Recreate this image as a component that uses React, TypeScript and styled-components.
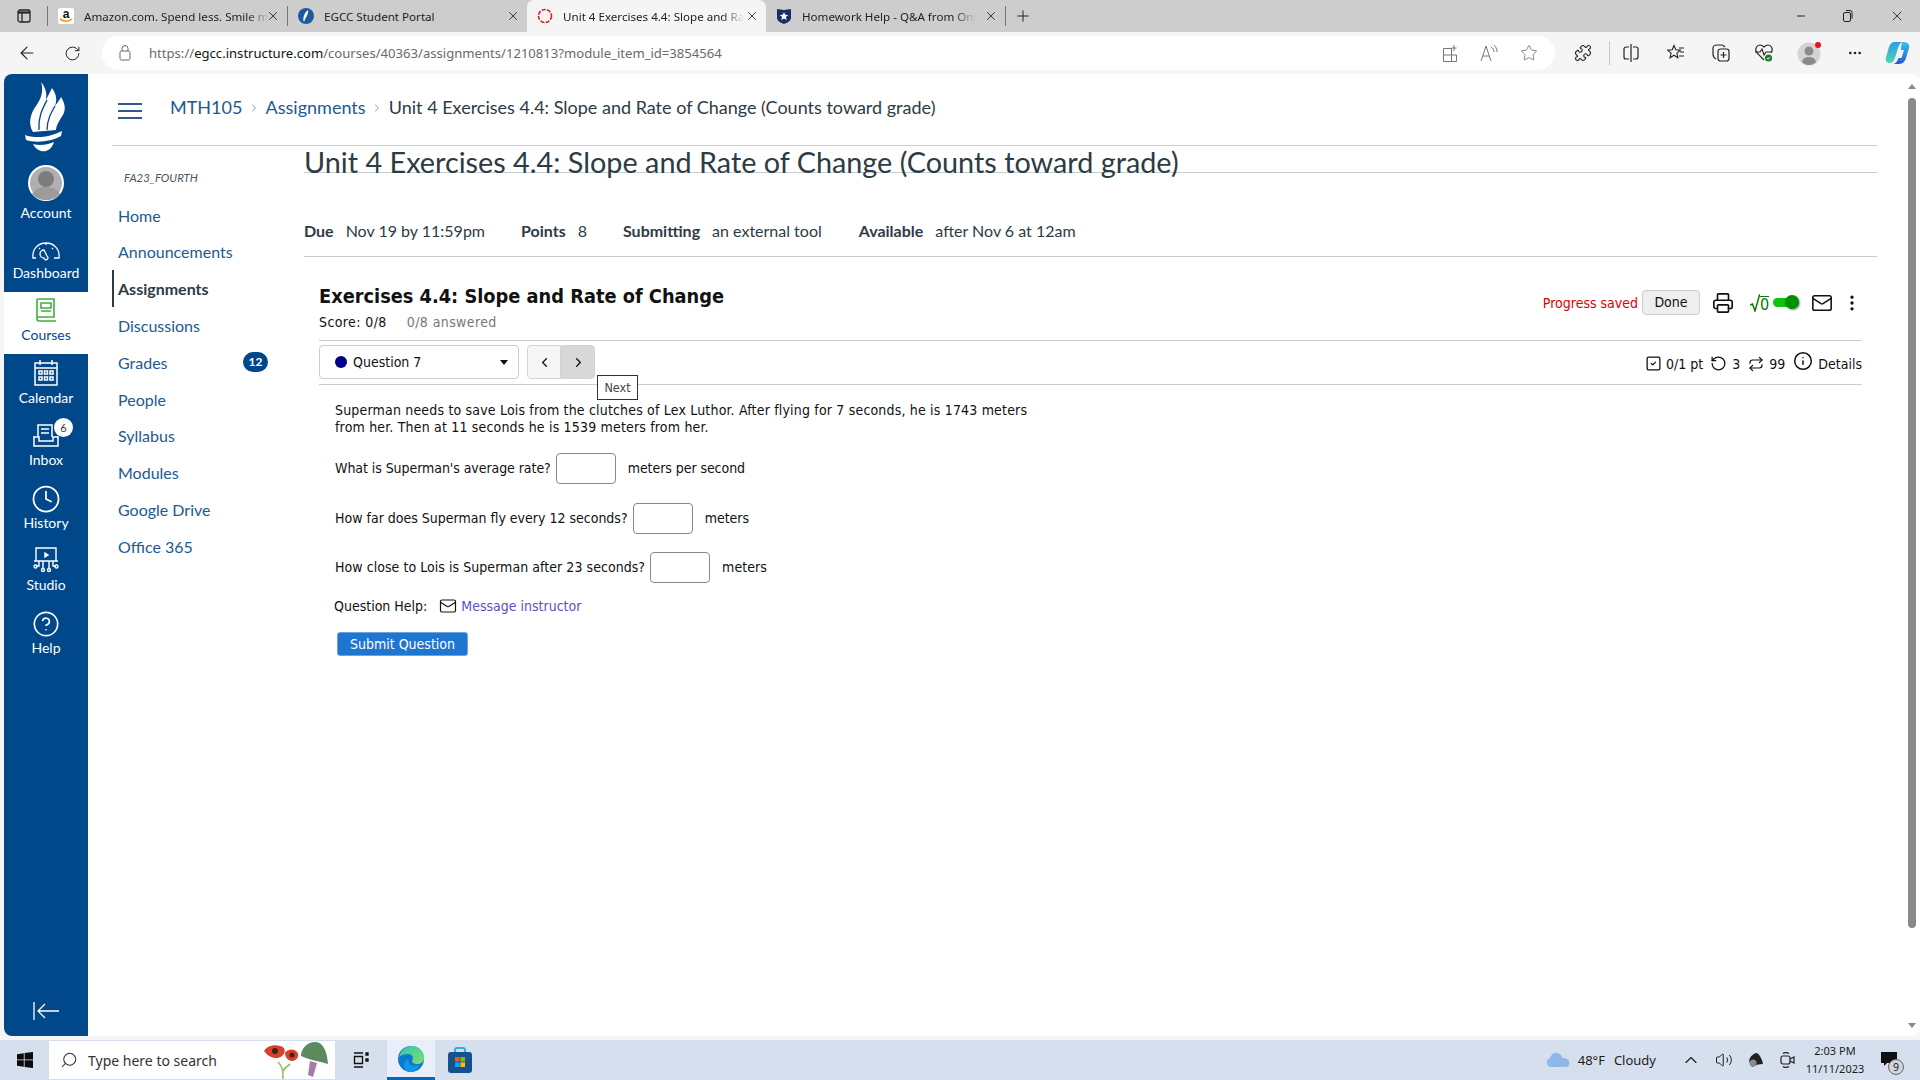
import React, { FC, ReactNode } from "react";
import styled, { createGlobalStyle } from "styled-components";
import {
  ArrowLeft,
  ChevronLeft,
  ChevronRight,
  ChevronUp,
  CircleHelp,
  Clock,
  Ellipsis,
  EllipsisVertical,
  Info,
  Mail,
  Minus,
  Plus,
  Printer,
  Puzzle,
  Repeat,
  RotateCcw,
  RotateCw,
  Search,
  SquareCheck,
  Star,
  Volume2,
  X,
} from "lucide-react";

const CHROME_FONT = `"Noto Sans", "Open Sans", sans-serif`;
const CANVAS_FONT = `Lato, "Open Sans", sans-serif`;
const QUIZ_FONT = `"DejaVu Sans Condensed", "DejaVu Sans", Verdana, sans-serif`;

const GlobalStyle = createGlobalStyle`
  html, body {
    margin: 0;
    height: 100%;
    overflow: hidden;
    background: #f5f5f5;
  }
  * { box-sizing: border-box; }
`;

const Screen = styled.div`
  display: flex;
  flex-direction: column;
  height: 1080px;
  width: 1920px;
  font-family: ${CHROME_FONT};
`;

/* browser chrome */
const TabStrip = styled.div`
  display: flex;
  align-items: center;
  height: 32px;
  background: #cdcdcd;
  color: #222;
`;

const SidebarToggle = styled.div`
  display: flex;
  align-items: center;
  justify-content: center;
  width: 47px;
  height: 32px;
  flex: none;
`;

const TabDivider = styled.div`
  width: 1px;
  height: 20px;
  background: #777;
  flex: none;
`;

const Tab = styled.div<{ $active?: boolean }>`
  display: flex;
  align-items: center;
  width: 239px;
  height: 32px;
  padding: 0 7px 0 10px;
  flex: none;
  font-size: 11.6px;
  background: ${(p) => (p.$active ? "#f5f5f5" : "transparent")};
  border-radius: ${(p) => (p.$active ? "7px 7px 0 0" : "0")};
`;

const Favicon = styled.span`
  display: flex;
  width: 16px;
  height: 16px;
  margin-right: 10px;
  flex: none;
`;

const TabTitle = styled.span`
  flex: 1;
  min-width: 0;
  white-space: nowrap;
`;

const TabFade = styled.span`
  display: inline-block;
  mask-image: linear-gradient(to left, transparent 0, #000 22px);
`;

const NewTab = styled.div`
  display: flex;
  margin-left: 8px;
`;

const WindowControls = styled.div`
  display: flex;
  align-items: center;
  gap: 35px;
  margin-left: auto;
  padding-right: 15px;
`;

const Toolbar = styled.div`
  display: flex;
  align-items: center;
  height: 42px;
  background: #f5f5f5;
  color: #222;
`;

const ToolButton = styled.div<{ $width: number }>`
  display: flex;
  align-items: center;
  justify-content: center;
  width: ${(p) => p.$width}px;
  height: 32px;
  flex: none;
`;

const AddressPill = styled.div`
  display: flex;
  align-items: center;
  width: 1453px;
  height: 34px;
  margin-left: 12px;
  padding-left: 17px;
  background: #fff;
  border-radius: 17px;
  flex: none;
`;

const Url = styled.div`
  margin-left: 18px;
  font-size: 13.1px;
  color: #6a6a6a;
  white-space: nowrap;
  b {
    font-weight: 400;
    color: #111;
  }
`;

const PillActions = styled.div`
  display: flex;
  align-items: center;
  gap: 22px;
  margin-left: auto;
  padding-right: 17px;
  color: #777;
`;

const ToolSeparator = styled.div`
  width: 1px;
  height: 24px;
  background: #c8c8c8;
  margin: 0 -1px 0 -2px;
  flex: none;
`;

/* page frame */
const Viewport = styled.div`
  display: flex;
  flex: 1;
  min-height: 0;
  margin: 0 0 4px 4px;
  background: #fff;
  border-radius: 8px;
  overflow: hidden;
`;

const GlobalNav = styled.nav`
  display: flex;
  flex-direction: column;
  width: 84px;
  flex: none;
  background: #00488a;
  font-family: ${CANVAS_FONT};
`;

const LogoSlot = styled.div`
  display: flex;
  justify-content: center;
  height: 88px;
  padding-top: 8px;
  flex: none;
`;

const NavItem = styled.div<{ $active?: boolean; $height?: number; $pad?: number }>`
  position: relative;
  display: flex;
  flex-direction: column;
  align-items: center;
  justify-content: flex-end;
  gap: 3px;
  height: ${(p) => p.$height ?? 62.2}px;
  padding-bottom: ${(p) => p.$pad ?? 10}px;
  flex: none;
  font-size: 14px;
  line-height: 18px;
  color: ${(p) => (p.$active ? "#00488a" : "#fff")};
  background: ${(p) => (p.$active ? "#fff" : "transparent")};
`;

const NavGlyph = styled.span<{ $lift: number }>`
  display: flex;
  margin-bottom: ${(p) => p.$lift}px;
`;

const NavBadge = styled.span`
  position: absolute;
  top: 1px;
  left: 50px;
  width: 19px;
  height: 19px;
  border-radius: 50%;
  background: #fff;
  color: #2d3b45;
  font-size: 11px;
  line-height: 19px;
  text-align: center;
`;

const Collapse = styled.div`
  display: flex;
  justify-content: center;
  margin-top: auto;
  padding-bottom: 16px;
  color: #fff;
`;

const Main = styled.main`
  display: flex;
  flex-direction: column;
  flex: 1;
  min-width: 0;
  font-family: ${CANVAS_FONT};
`;

const Breadcrumbs = styled.div`
  display: flex;
  align-items: center;
  height: 72px;
  margin: 0 27px 0 24px;
  border-bottom: 1px solid #c7cdd1;
  flex: none;
  padding-bottom: 5px;
  font-size: 18px;
  color: #2d3b45;
`;

const Hamburger = styled.div`
  display: flex;
  flex-direction: column;
  gap: 5px;
  width: 24px;
  margin: 7px 28px 0 6px;
  span {
    height: 2px;
    background: #2d5b8e;
  }
`;

const Crumb = styled.span<{ $link?: boolean }>`
  color: ${(p) => (p.$link ? "#1d5a90" : "#2d3b45")};
`;

const CrumbSep = styled.span`
  display: flex;
  margin: 2px 5.6px 0;
  color: #8b969e;
`;

const Body = styled.div`
  display: flex;
  flex: 1;
  min-height: 0;
`;

const CourseNav = styled.div`
  width: 216px;
  padding: 25px 0 0 24px;
  flex: none;
`;

const Term = styled.div`
  margin: 0 0 11.8px 12px;
  font-size: 11.4px;
  line-height: 14px;
  font-style: italic;
  color: #4a5660;
`;

const CourseLink = styled.div<{ $active?: boolean }>`
  display: flex;
  align-items: center;
  justify-content: space-between;
  width: 156px;
  height: 36.8px;
  padding-left: 4px;
  font-size: 16px;
  font-weight: ${(p) => (p.$active ? 700 : 400)};
  color: ${(p) => (p.$active ? "#2d3b45" : "#1d5a90")};
  border-left: 2px solid ${(p) => (p.$active ? "#2d3b45" : "transparent")};
`;

const CountBadge = styled.span`
  min-width: 25px;
  height: 20px;
  border-radius: 10px;
  background: #00488a;
  color: #fff;
  font-size: 12px;
  font-weight: 700;
  line-height: 20px;
  text-align: center;
`;

const Content = styled.div`
  flex: 1;
  min-width: 0;
  margin-right: 27px;
`;

const PageTitle = styled.h1`
  height: 27px;
  margin: 0;
  font-size: 28.8px;
  font-weight: 400;
  line-height: 32px;
  color: #2d3b45;
  border-bottom: 1px solid #c7cdd1;
  white-space: nowrap;
`;

const DetailsRow = styled.div`
  display: flex;
  height: 84px;
  padding-top: 46px;
  border-bottom: 1px solid #c7cdd1;
  font-size: 16px;
  line-height: 24px;
  color: #2d3b45;
`;

const DetailLabel = styled.b<{ $gap: number }>`
  margin-right: 12px;
  margin-left: ${(p) => p.$gap}px;
`;

/* embedded quiz */
const Quiz = styled.div`
  padding: 0 15px;
  font-family: ${QUIZ_FONT};
  font-size: 14px;
  color: #111;
`;

const QuizHeader = styled.div`
  display: flex;
  justify-content: space-between;
  height: 84px;
  padding-top: 27px;
  border-bottom: 1px solid #ccc;
`;

const QuizTitle = styled.h2`
  margin: 0;
  font-size: 19.8px;
  font-weight: 700;
  line-height: 26px;
  color: #111;
`;

const ScoreLine = styled.div`
  display: flex;
  gap: 20px;
  margin-top: 3px;
  letter-spacing: 0.4px;
  line-height: 18px;
`;

const Muted = styled.span`
  color: #777;
`;

const HeaderTools = styled.div`
  display: flex;
  align-items: center;
  height: 25px;
  margin-top: 6px;
`;

const Saved = styled.span`
  color: #e00000;
  margin-right: 4px;
`;

const DoneButton = styled.div`
  width: 58px;
  height: 25px;
  margin-right: 12px;
  border: 1px solid #ccc;
  border-radius: 4px;
  background: #eee;
  line-height: 23px;
  text-align: center;
`;

const Sqrt = styled.span`
  display: flex;
  align-items: flex-end;
  width: 20px;
  height: 18px;
  margin-left: 16px;
  font-size: 16px;
  line-height: 15px;
  color: #087a08;
  span {
    border-top: 1.5px solid #087a08;
  }
`;

const Toggle = styled.span`
  position: relative;
  display: block;
  width: 22px;
  height: 9px;
  margin: 0 16px 0 3px;
  border-radius: 5px;
  background: #0cc40c;
  &::after {
    content: "";
    position: absolute;
    right: -4px;
    top: -3px;
    width: 14px;
    height: 14px;
    border-radius: 50%;
    background: #008f00;
    box-shadow: 1px 1px 2px rgba(0, 0, 0, 0.45);
  }
`;

const QuestionBar = styled.div`
  display: flex;
  align-items: center;
  justify-content: space-between;
  height: 44px;
  padding: 4px 0 5px;
  border-bottom: 1px solid #ccc;
`;

const BarLeft = styled.div`
  display: flex;
  align-items: center;
  gap: 8px;
`;

const QuestionSelect = styled.div`
  display: flex;
  align-items: center;
  width: 200px;
  height: 34px;
  padding: 0 10px 0 15px;
  border: 1px solid #ccc;
  border-radius: 4px;
`;

const StatusDot = styled.span`
  width: 12px;
  height: 12px;
  margin-right: 6px;
  border-radius: 50%;
  background: #00008b;
`;

const Caret = styled.span`
  margin-left: auto;
  width: 0;
  height: 0;
  border: 4px solid transparent;
  border-top: 5px solid #111;
  border-bottom: 0;
`;

const Stepper = styled.div`
  position: relative;
  display: flex;
  height: 34px;
`;

const StepButton = styled.div<{ $hover?: boolean }>`
  display: flex;
  align-items: center;
  justify-content: center;
  width: 34px;
  background: ${(p) => (p.$hover ? "#d8d8d8" : "#f6f6f6")};
  border: 1px solid #d4d4d4;
  border-radius: ${(p) => (p.$hover ? "0 4px 4px 0" : "4px 0 0 4px")};
`;

const Tooltip = styled.div`
  position: absolute;
  left: 70px;
  top: 30px;
  width: 41px;
  height: 25px;
  border: 1px solid #333;
  background: #fff;
  color: #444;
  font-size: 12.5px;
  line-height: 23px;
  text-align: center;
  z-index: 2;
`;

const Meta = styled.div`
  display: flex;
  align-items: center;
  padding-top: 3px;
`;

const MetaIcon = styled.span<{ $left: number; $right: number; $lift?: number }>`
  display: flex;
  margin: 0 ${(p) => p.$right}px ${(p) => p.$lift ?? 0}px ${(p) => p.$left}px;
`;

const Question = styled.div`
  padding: 17px 0 0 16px;
  line-height: 17px;
`;

const Prompt = styled.p`
  width: 700px;
  margin: 0;
  letter-spacing: 0.18px;
`;

const AnswerRow = styled.div<{ $top: number; $track: number }>`
  display: flex;
  align-items: center;
  margin-top: ${(p) => p.$top}px;
  letter-spacing: ${(p) => p.$track}px;
`;

const AnswerBox = styled.span`
  width: 60px;
  height: 31px;
  margin: 0 12px 0 5px;
  border: 1px solid #888;
  border-radius: 4px;
`;

const HelpRow = styled.div`
  display: flex;
  align-items: center;
  height: 18px;
  margin: 14px 0 0 -1px;
`;

const HelpLabel = styled.span`
  margin-right: 12px;
`;

const HelpLink = styled.span`
  margin-left: 4px;
  color: #5a52c4;
`;

const SubmitButton = styled.div`
  width: 131px;
  height: 24px;
  margin: 17px 0 0 2px;
  border-radius: 3px;
  background: #1f76d0;
  border: 1px solid #6aa5e0;
  color: #fff;
  line-height: 22px;
  text-align: center;
`;

const ScrollBar = styled.div`
  width: 16px;
  flex: none;
  display: flex;
  flex-direction: column;
  align-items: center;
  padding: 10px 0 8px;
`;

const ScrollArrow = styled.span<{ $down?: boolean }>`
  width: 0;
  height: 0;
  border: 4px solid transparent;
  ${(p) =>
    p.$down
      ? "border-top: 5px solid #8a8a8a; border-bottom: 0; margin-top: auto;"
      : "border-bottom: 5px solid #8a8a8a; border-top: 0;"}
`;

const ScrollThumb = styled.span`
  width: 8px;
  height: 830px;
  margin-top: 9px;
  background: #8a8a8a;
  border-radius: 4px;
`;

/* taskbar */
const Taskbar = styled.div`
  display: flex;
  align-items: center;
  height: 40px;
  background: #d5dfee;
  color: #1c1c1c;
  flex: none;
`;

const StartSlot = styled.div`
  display: flex;
  justify-content: center;
  width: 49px;
  flex: none;
`;

const SearchBox = styled.div`
  display: flex;
  align-items: center;
  width: 286px;
  height: 38px;
  padding: 0 5px 0 11px;
  background: #fff;
  flex: none;
  font-size: 14px;
  color: #333;
`;

const SearchText = styled.span`
  margin-left: 10px;
`;

const SearchArt = styled.span`
  display: flex;
  margin-left: auto;
`;

const SearchGlyph = styled(Search)`
  transform: scaleX(-1);
`;

const TaskSlot = styled.div<{ $active?: boolean; $width: number }>`
  display: flex;
  align-items: center;
  justify-content: center;
  width: ${(p) => p.$width}px;
  height: 40px;
  flex: none;
  background: ${(p) => (p.$active ? "#e9eef8" : "transparent")};
  border-bottom: ${(p) => (p.$active ? "3px solid #0067c0" : "0")};
`;

const Tray = styled.div`
  display: flex;
  align-items: center;
  margin-left: auto;
  font-size: 13px;
`;

const TrayIcon = styled.span<{ $width: number }>`
  display: flex;
  justify-content: center;
  width: ${(p) => p.$width}px;
`;

const Weather = styled.span`
  display: flex;
  align-items: center;
  gap: 8px;
  margin-right: 15px;
  span + span {
    margin-left: 1px;
  }
`;

const TrayClock = styled.div`
  width: 64px;
  margin-left: 2px;
  font-size: 11px;
  line-height: 18px;
  text-align: center;
`;

const Notify = styled.span`
  position: relative;
  display: flex;
  width: 36px;
  margin: 0 3px 0 14px;
`;

const NotifyCount = styled.span`
  position: absolute;
  left: 7px;
  top: 7px;
  width: 16px;
  height: 16px;
  border: 1px solid #666;
  border-radius: 50%;
  background: #cfd6e2;
  font-size: 10.5px;
  line-height: 14px;
  text-align: center;
`;

/* drawings */
const TorchLogo: FC = () => (
  <svg width="42" height="70" viewBox="0 0 42 70" fill="#fff">
    <path d="M16 0C21 6 22 12 21 18 23 14 25 10 27 6 32 13 32 19 30 24 33 20 35 17 36 15 41 23 41 29 36 36 33 41 31 44 31 48L8 50C3 42 5 32 11 24 16 17 19 9 16 0z" />
    <path d="M22 18C18 26 13 34 14 48M30 24C26 31 22 38 22 48" fill="none" stroke="#00488a" strokeWidth="1.300" />
    <path d="M0 53C10 57 26 55 37 49L36 54C26 60 10 61 1 58z" />
    <path d="M8 62C14 64 22 63 29 60 27 66 24 68 21 69 16 70 11 68 8 62z" />
  </svg>
);

const Avatar: FC = () => (
  <svg width="36" height="36" viewBox="0 0 36 36">
    <circle cx="18" cy="18" r="17" fill="#b0b0b0" stroke="#fff" strokeWidth="2" />
    <circle cx="18" cy="14" r="8" fill="#7d7d7d" />
    <path d="M4 29c3-6 9-7 14-7s11 1 14 7c-3 4-8 6-14 6S7 33 4 29z" fill="#9c9c9c" />
  </svg>
);

const DashboardIcon: FC = () => (
  <svg width="28" height="20" viewBox="0 0 28 20" fill="none" stroke="#fff" strokeWidth="1.3">
    <path d="M4 17H1c-1-9 5-15 13-15s14 6 13 15h-5" />
    <path d="M12 9l3 6a2 2 0 1 1-3 2 2 2 0 0 1 0-8zM7 7l1 1M21 7l-1 1M14 2v2" />
  </svg>
);

const CoursesIcon: FC = () => (
  <svg width="22" height="25" viewBox="0 0 22 25" fill="none" stroke="#3fae3f" strokeWidth="1.6">
    <path d="M2 20V2a1 1 0 0 1 1-1h16v18H4a2 2 0 0 0-2 2 2 2 0 0 0 2 2h17" />
    <path d="M6 5h10v5H6zM6 13h10" />
  </svg>
);

const CalendarIcon: FC = () => (
  <svg width="24" height="27" viewBox="0 0 24 27" fill="none" stroke="#fff" strokeWidth="1.5">
    <path d="M1 4h22v22H1zM1 9h22M6 1v5M18 1v5" />
    <path d="M5 12h3v3H5zM10.500 12h3v3h-3zM16 12h3v3h-3zM5 18h3v3H5zM10.500 18h3v3h-3zM16 18h3v3h-3z" />
  </svg>
);

const InboxIcon: FC = () => (
  <svg width="26" height="24" viewBox="0 0 26 24" fill="none" stroke="#fff" strokeWidth="1.5">
    <path d="M5 13V1h14v12M1 12v10h24V12M1 13h5v4h14v-4h5" />
    <path d="M8 5h8M8 9h8" />
  </svg>
);

const StudioIcon: FC = () => (
  <svg width="26" height="26" viewBox="0 0 26 26" fill="none" stroke="#fff" strokeWidth="1.4">
    <path d="M3 1h20v13H3zM1 14h24" />
    <path d="M12 6l3 2-3 2z" fill="#fff" />
    <path d="M6 14v5H3M10 14v7M16 14v7M20 14v5h3" />
    <circle cx="2.500" cy="19.500" r="1.500" />
    <circle cx="10" cy="23" r="1.500" />
    <circle cx="16" cy="23" r="1.500" />
    <circle cx="23.500" cy="19.500" r="1.500" />
  </svg>
);

const AmazonIcon: FC = () => (
  <svg width="16" height="16" viewBox="0 0 16 16">
    <rect width="16" height="16" rx="2" fill="#fff" />
    <text x="8" y="10" fontSize="12" fontWeight="700" fontFamily="Liberation Sans" textAnchor="middle" fill="#111">
      a
    </text>
    <path d="M2 11c4 3 9 3 12 0" fill="none" stroke="#f90" strokeWidth="1.6" />
  </svg>
);

const EgccIcon: FC = () => (
  <svg width="16" height="16" viewBox="0 0 16 16">
    <circle cx="8" cy="8" r="8" fill="#1d5c9c" />
    <path d="M10 2c1 4-3 8-4 12-2-4 1-10 4-12z" fill="#fff" />
  </svg>
);

const LoadingIcon: FC = () => (
  <svg width="16" height="16" viewBox="0 0 16 16" fill="none">
    <circle cx="8" cy="8" r="6.500" stroke="#d8232a" strokeWidth="1.6" strokeDasharray="4 1.300" />
  </svg>
);

const ShieldIcon: FC = () => (
  <svg width="16" height="16" viewBox="0 0 16 16">
    <path d="M1 1l7 1 7-1v9c0 3-4 5-7 6-3-1-7-3-7-6z" fill="#16306e" />
    <path d="M8 4l1.200 2.800 3 .2-2.300 2 .8 3L8 10.400 5.300 12l.8-3-2.300-2 3-.2z" fill="#fff" />
  </svg>
);

const RestoreIcon: FC = () => (
  <svg width="12" height="14" viewBox="0 0 12 14" fill="none" stroke="#222">
    <rect x="1.500" y="3.500" width="7" height="9" rx="1.500" />
    <path d="M4 1.500h4a2 2 0 0 1 2 2v6" />
  </svg>
);

const TabGridIcon: FC = () => (
  <svg width="14" height="14" viewBox="0 0 14 14" fill="none" stroke="#222" strokeWidth="1.300">
    <rect x="1" y="1" width="12" height="12" rx="2" />
    <path d="M1 3.500h12" strokeWidth="2.200" />
    <path d="M5 4v9" />
  </svg>
);

const AppsIcon: FC = () => (
  <svg width="16" height="18" viewBox="0 0 16 18" fill="none" stroke="#777">
    <path d="M1.500 4.500h8v13h-8zM1.500 11h13v6.500h-5M9.500 4.500v13M12 1v6M9.500 4h5" />
  </svg>
);

const ReadAloudIcon: FC = () => (
  <svg width="18" height="18" viewBox="0 0 18 18" fill="none" stroke="#777">
    <path d="M1 17L6 2l5 15M3 12h6M11 3c2 1 3 3 3 5M14 1c2 2 3 4 3 7" />
  </svg>
);

const SplitIcon: FC = () => (
  <svg width="16" height="18" viewBox="0 0 16 18" fill="none" stroke="#222" strokeWidth="1.200">
    <path d="M6 3H3a2 2 0 0 0-2 2v8a2 2 0 0 0 2 2h3M10 3h3a2 2 0 0 1 2 2v8a2 2 0 0 1-2 2h-3M8 0v18" />
  </svg>
);

const FavoritesIcon: FC = () => (
  <svg width="18" height="18" viewBox="0 0 18 18" fill="none" stroke="#222" strokeWidth="1.100">
    <path d="M7 1.500l1.800 4.200 4.500.4-3.400 3 1 4.600L7 11.200l-3.900 2.500 1-4.600-3.400-3 4.500-.4z" />
    <path d="M12 4h5M13 8h4M12 12h5" />
  </svg>
);

const CollectionsIcon: FC = () => (
  <svg width="20" height="20" viewBox="0 0 20 20" fill="none" stroke="#222" strokeWidth="1.200">
    <path d="M5 16c-2-1-3-3-3-5V5c0-2 2-3 4-3h5c1 0 2 1 3 2" />
    <rect x="7" y="6" width="11" height="12" rx="2.500" />
    <path d="M12.500 9v6M9.500 12h6" />
  </svg>
);

const HealthIcon: FC = () => (
  <svg width="20" height="20" viewBox="0 0 20 20" fill="none">
    <path
      d="M10 17L3 10C0 6 3 2 6 2c2 0 3 1 4 2 1-1 2-2 4-2 3 0 6 4 3 8M1 9h5l2-3 2 6 2-3h6"
      stroke="#222"
      strokeWidth="1.100"
    />
    <circle cx="14.500" cy="15" r="3.600" fill="#1f7a2e" />
    <path d="M13 15l1.100 1.200 1.800-2" stroke="#fff" />
  </svg>
);

const ProfileIcon: FC = () => (
  <svg width="28" height="28" viewBox="0 0 28 28">
    <circle cx="13" cy="15" r="11.500" fill="#d4d4d4" />
    <circle cx="13" cy="12" r="4.500" fill="#8a8a8a" />
    <path d="M6 23c1-4 4-5 7-5s6 1 7 5c-2 2-4 3-7 3s-5-1-7-3z" fill="#8a8a8a" />
    <circle cx="22" cy="6" r="3" fill="#e81123" />
  </svg>
);

const CopilotIcon: FC = () => (
  <svg width="26" height="26" viewBox="0 0 26 26">
    <defs>
      <linearGradient id="copA" x1="0" y1="0" x2="0" y2="1">
        <stop offset="0" stopColor="#2f9be8" />
        <stop offset="1" stopColor="#4fd6b0" />
      </linearGradient>
      <linearGradient id="copB" x1="0" y1="0" x2="0" y2="1">
        <stop offset="0" stopColor="#36c2ee" />
        <stop offset="1" stopColor="#2a55d8" />
      </linearGradient>
    </defs>
    <path d="M9 2h8c-2 1-3 3-4 6l-3 10c-1 3-3 5-5 5-3 0-5-2-4-6l3-10c1-3 3-5 5-5z" fill="url(#copA)" />
    <path d="M17 2h2c4 0 6 3 5 6l-3 10c-1 3-3 6-7 6H7c3 0 5-2 6-5l3-10c0-3 1-6 1-7z" fill="url(#copB)" />
    <path d="M14.500 10h4.500l-2.500 8H12z" fill="#f5f5f5" />
  </svg>
);

const WindowsLogo: FC = () => (
  <svg width="16" height="16" viewBox="0 0 16 16" fill="#0b0b0b">
    <path d="M0 2.200l6.800-1v6.300H0zM7.600 1.100L16 0v7.500H7.600zM0 8.300h6.800v6.500L0 13.800zM7.600 8.300H16V16l-8.400-1.100z" />
  </svg>
);

const PoppyArt: FC = () => (
  <svg width="66" height="38" viewBox="0 0 66 38">
    <path d="M19 38c0-8 0-12-5-17M19 30c2-3 4-5 7-7" stroke="#8cc06a" strokeWidth="1.600" fill="none" />
    <path d="M0 10c3-5 10-7 16-5 6 1 6 7 2 10-5 4-13 2-18-5z" fill="#d9402a" />
    <circle cx="11" cy="10" r="3" fill="#3a2418" />
    <path d="M21 12c2-4 9-5 12-1 3 3 0 9-5 9-4 0-7-4-7-8z" fill="#d9402a" />
    <circle cx="28" cy="14" r="2.500" fill="#3a2418" />
    <path d="M37 15C37 7 44 1 51 1c7 0 12 7 13 22-9-3-19-4-27-8z" fill="#5b8a5e" />
    <path d="M46 20l7 2-4 14-5-2z" fill="#a77aa8" />
  </svg>
);

const EdgeIcon: FC = () => (
  <svg width="26" height="26" viewBox="0 0 26 26">
    <defs>
      <linearGradient id="edgeA" x1="0" y1="0" x2="1" y2="1">
        <stop offset="0" stopColor="#36c3b0" />
        <stop offset="1" stopColor="#7ce06a" />
      </linearGradient>
    </defs>
    <circle cx="13" cy="13" r="13" fill="#0c79d0" />
    <path d="M1 11C3 4 8 0 14 0c7 0 12 5 12 12 0 4-3 6-7 6-3 0-5-1-5-3 0-1 1-1 1-3s-2-4-5-4C6 8 3 9 1 11z" fill="url(#edgeA)" />
    <path d="M10 13c0 4 3 7 7 7 2 0 4-1 5-2-2 5-6 8-10 8-3 0-5-2-6-5 0-4 1-7 4-8z" fill="#1295e8" />
  </svg>
);

const StoreIcon: FC = () => (
  <svg width="24" height="26" viewBox="0 0 24 26">
    <path d="M7 6V3a2 2 0 0 1 2-2h6a2 2 0 0 1 2 2v3" fill="none" stroke="#20b6e8" strokeWidth="2" />
    <rect y="5" width="24" height="21" rx="3" fill="#17508f" />
    <rect x="7" y="10" width="4.600" height="4.600" fill="#f35325" />
    <rect x="12.400" y="10" width="4.600" height="4.600" fill="#81bc06" />
    <rect x="7" y="15.400" width="4.600" height="4.600" fill="#05a6f0" />
    <rect x="12.400" y="15.400" width="4.600" height="4.600" fill="#ffba08" />
  </svg>
);

const TaskViewIcon: FC = () => (
  <svg width="16" height="16" viewBox="0 0 16 16" fill="none" stroke="#111" strokeWidth="1.300">
    <path d="M1 1h9M1 15h9M1.500 4.500h8v7h-8z" />
    <path d="M13 1h2v2h-2zM13 7h2v2h-2z" fill="#111" />
  </svg>
);

const CloudIcon: FC = () => (
  <svg width="24" height="16" viewBox="0 0 24 16">
    <path d="M5 15a4.500 4.500 0 0 1-1-8.800C5 2 9 0 12 1c3 1 4 3 4.500 5 4-.5 7 2 7 5 0 3-2 4-4 4z" fill="#8fb8ea" />
  </svg>
);

const MeetIcon: FC = () => (
  <svg width="16" height="18" viewBox="0 0 16 18" fill="none" stroke="#222" strokeWidth="1.200">
    <rect x="1" y="5" width="9" height="8" rx="2" />
    <path d="M10 8l4-2v6l-4-2M3 2.500C4 1.500 7 1 9 2.500M3 15.500c1 1 4 1.500 6 0" />
  </svg>
);

const SpeakerTray: FC = () => (
  <svg width="16" height="16" viewBox="0 0 16 16">
    <path d="M1 9C2 4 6 1 9 1c3 2 5 6 6 11-4 0-8 1-11 3z" fill="#222" />
    <circle cx="5" cy="11" r="3.500" fill="#8a8a8a" />
  </svg>
);

const ChromeIcon: FC<{ children: ReactNode; width: number }> = ({ children, width }) => (
  <ToolButton $width={width}>{children}</ToolButton>
);

type TabData = { title: string; icon: ReactNode; active?: boolean; fade?: boolean };

const tabs: TabData[] = [
  { title: "Amazon.com. Spend less. Smile m", icon: <AmazonIcon />, fade: true },
  { title: "EGCC Student Portal", icon: <EgccIcon /> },
  { title: "Unit 4 Exercises 4.4: Slope and Ra", icon: <LoadingIcon />, active: true, fade: true },
  { title: "Homework Help - Q&A from Onl", icon: <ShieldIcon />, fade: true },
];

const courseLinks = [
  "Home",
  "Announcements",
  "Assignments",
  "Discussions",
  "Grades",
  "People",
  "Syllabus",
  "Modules",
  "Google Drive",
  "Office 365",
];

const App: FC = () => (
  <Screen>
    <GlobalStyle />
    <TabStrip>
      <SidebarToggle>
        <TabGridIcon />
      </SidebarToggle>
      <TabDivider />
      {tabs.map((tab, i) => (
        <React.Fragment key={tab.title}>
          <Tab $active={tab.active}>
            <Favicon>{tab.icon}</Favicon>
            <TabTitle>{tab.fade ? <TabFade>{tab.title}</TabFade> : tab.title}</TabTitle>
            <X size={14} strokeWidth={1.5} />
          </Tab>
          {i === 0 && <TabDivider />}
        </React.Fragment>
      ))}
      <TabDivider />
      <NewTab>
        <Plus size={18} strokeWidth={1.3} />
      </NewTab>
      <WindowControls>
        <Minus size={12} strokeWidth={2} />
        <RestoreIcon />
        <X size={16} strokeWidth={1.3} />
      </WindowControls>
    </TabStrip>

    <Toolbar>
      <ChromeIcon width={54}>
        <ArrowLeft size={20} strokeWidth={1.4} />
      </ChromeIcon>
      <ChromeIcon width={36}>
        <RotateCw size={17} strokeWidth={1.4} />
      </ChromeIcon>
      <AddressPill>
        <svg width="12" height="16" viewBox="0 0 12 16" fill="none" stroke="#666">
          <rect x="1" y="6" width="10" height="9" rx="1.500" />
          <path d="M3 6V3.500a3 3 0 0 1 6 0V6" />
        </svg>
        <Url>
          https://<b>egcc.instructure.com</b>/courses/40363/assignments/1210813?module_item_id=3854564
        </Url>
        <PillActions>
          <AppsIcon />
          <ReadAloudIcon />
          <Star size={18} strokeWidth={1.2} />
        </PillActions>
      </AddressPill>
      <ChromeIcon width={56}>
        <Puzzle size={18} strokeWidth={1.5} />
      </ChromeIcon>
      <ToolSeparator />
      <ChromeIcon width={44}>
        <SplitIcon />
      </ChromeIcon>
      <ChromeIcon width={46}>
        <FavoritesIcon />
      </ChromeIcon>
      <ChromeIcon width={44}>
        <CollectionsIcon />
      </ChromeIcon>
      <ChromeIcon width={42}>
        <HealthIcon />
      </ChromeIcon>
      <ChromeIcon width={50}>
        <ProfileIcon />
      </ChromeIcon>
      <ChromeIcon width={40}>
        <Ellipsis size={16} strokeWidth={2} />
      </ChromeIcon>
      <ChromeIcon width={46}>
        <CopilotIcon />
      </ChromeIcon>
    </Toolbar>

    <Viewport>
      <GlobalNav>
        <LogoSlot>
          <TorchLogo />
        </LogoSlot>
        <NavItem $height={68} $pad={8}>
          <Avatar />
          Account
        </NavItem>
        <NavItem>
          <DashboardIcon />
          Dashboard
        </NavItem>
        <NavItem $active>
          <CoursesIcon />
          Courses
        </NavItem>
        <NavItem>
          <CalendarIcon />
          Calendar
        </NavItem>
        <NavItem>
          <InboxIcon />
          <NavBadge>6</NavBadge>
          Inbox
        </NavItem>
        <NavItem $height={63.5}>
          <NavGlyph $lift={-3}>
            <Clock size={30} strokeWidth={1.4} />
          </NavGlyph>
          History
        </NavItem>
        <NavItem>
          <StudioIcon />
          Studio
        </NavItem>
        <NavItem>
          <NavGlyph $lift={-2}>
            <CircleHelp size={28} strokeWidth={1.4} />
          </NavGlyph>
          Help
        </NavItem>
        <Collapse>
          <svg width="26" height="18" viewBox="0 0 26 18" fill="none" stroke="#fff" strokeWidth="1.300">
            <path d="M1 0v18M26 9H5M12 2L5 9l7 7" />
          </svg>
        </Collapse>
      </GlobalNav>

      <Main>
        <Breadcrumbs>
          <Hamburger>
            <span />
            <span />
            <span />
          </Hamburger>
          <Crumb $link>MTH105</Crumb>
          <CrumbSep>
            <ChevronRight size={12} />
          </CrumbSep>
          <Crumb $link>Assignments</Crumb>
          <CrumbSep>
            <ChevronRight size={12} />
          </CrumbSep>
          <Crumb>Unit 4 Exercises 4.4: Slope and Rate of Change (Counts toward grade)</Crumb>
        </Breadcrumbs>
        <Body>
          <CourseNav>
            <Term>FA23_FOURTH</Term>
            {courseLinks.map((link) => (
              <CourseLink key={link} $active={link === "Assignments"}>
                {link}
                {link === "Grades" && <CountBadge>12</CountBadge>}
              </CourseLink>
            ))}
          </CourseNav>
          <Content>
            <PageTitle>Unit 4 Exercises 4.4: Slope and Rate of Change (Counts toward grade)</PageTitle>
            <DetailsRow>
              <DetailLabel $gap={0}>Due</DetailLabel>
              Nov 19 by 11:59pm
              <DetailLabel $gap={36}>Points</DetailLabel>
              8
              <DetailLabel $gap={36}>Submitting</DetailLabel>
              an external tool
              <DetailLabel $gap={37}>Available</DetailLabel>
              after Nov 6 at 12am
            </DetailsRow>
            <Quiz>
              <QuizHeader>
                <div>
                  <QuizTitle>Exercises 4.4: Slope and Rate of Change</QuizTitle>
                  <ScoreLine>
                    <span>Score: 0/8</span>
                    <Muted>0/8 answered</Muted>
                  </ScoreLine>
                </div>
                <HeaderTools>
                  <Saved>Progress saved</Saved>
                  <DoneButton>Done</DoneButton>
                  <Printer size={22} strokeWidth={1.8} />
                  <Sqrt>
                    <svg width="10" height="18" viewBox="0 0 10 18" fill="none" stroke="#087a08" strokeWidth="1.500">
                      <path d="M0 11l2.500-1L5 17 9.500 1H10" />
                    </svg>
                    <span>0</span>
                  </Sqrt>
                  <Toggle />
                  <Mail size={22} strokeWidth={1.7} />
                  <MetaIcon $left={9} $right={0}>
                    <EllipsisVertical size={20} strokeWidth={2} />
                  </MetaIcon>
                </HeaderTools>
              </QuizHeader>
              <QuestionBar>
                <BarLeft>
                  <QuestionSelect>
                    <StatusDot />
                    Question 7
                    <Caret />
                  </QuestionSelect>
                  <Stepper>
                    <StepButton>
                      <ChevronLeft size={15} strokeWidth={2} />
                    </StepButton>
                    <StepButton $hover>
                      <ChevronRight size={15} strokeWidth={2} />
                    </StepButton>
                    <Tooltip>Next</Tooltip>
                  </Stepper>
                </BarLeft>
                <Meta>
                  <MetaIcon $left={0} $right={4}>
                    <SquareCheck size={17} strokeWidth={1.8} />
                  </MetaIcon>
                  0/1 pt
                  <MetaIcon $left={7} $right={5}>
                    <RotateCcw size={17} strokeWidth={1.8} />
                  </MetaIcon>
                  3
                  <MetaIcon $left={8} $right={5}>
                    <Repeat size={16} strokeWidth={1.8} />
                  </MetaIcon>
                  99
                  <MetaIcon $left={8} $right={5} $lift={6}>
                    <Info size={20} strokeWidth={1.8} />
                  </MetaIcon>
                  Details
                </Meta>
              </QuestionBar>
              <Question>
                <Prompt>
                  Superman needs to save Lois from the clutches of Lex Luthor. After flying for 7 seconds, he is
                  1743 meters from her. Then at 11 seconds he is 1539 meters from her.
                </Prompt>
                <AnswerRow $top={17} $track={-0.06}>
                  What is Superman's average rate?
                  <AnswerBox />
                  meters per second
                </AnswerRow>
                <AnswerRow $top={19} $track={0}>
                  How far does Superman fly every 12 seconds?
                  <AnswerBox />
                  meters
                </AnswerRow>
                <AnswerRow $top={18} $track={0.05}>
                  How close to Lois is Superman after 23 seconds?
                  <AnswerBox />
                  meters
                </AnswerRow>
                <HelpRow>
                  <HelpLabel>Question Help:</HelpLabel>
                  <Mail size={18} strokeWidth={1.6} />
                  <HelpLink>Message instructor</HelpLink>
                </HelpRow>
                <SubmitButton>Submit Question</SubmitButton>
              </Question>
            </Quiz>
          </Content>
        </Body>
      </Main>

      <ScrollBar>
        <ScrollArrow />
        <ScrollThumb />
        <ScrollArrow $down />
      </ScrollBar>
    </Viewport>

    <Taskbar>
      <StartSlot>
        <WindowsLogo />
      </StartSlot>
      <SearchBox>
        <SearchGlyph size={18} strokeWidth={1.4} />
        <SearchText>Type here to search</SearchText>
        <SearchArt>
          <PoppyArt />
        </SearchArt>
      </SearchBox>
      <TaskSlot $width={52}>
        <TaskViewIcon />
      </TaskSlot>
      <TaskSlot $width={48} $active>
        <EdgeIcon />
      </TaskSlot>
      <TaskSlot $width={50}>
        <StoreIcon />
      </TaskSlot>
      <Tray>
        <Weather>
          <CloudIcon />
          <span>48°F</span>
          <span>Cloudy</span>
        </Weather>
        <TrayIcon $width={40}>
          <ChevronUp size={20} strokeWidth={1.4} />
        </TrayIcon>
        <TrayIcon $width={26}>
          <Volume2 size={18} strokeWidth={1.3} />
        </TrayIcon>
        <TrayIcon $width={38}>
          <SpeakerTray />
        </TrayIcon>
        <TrayIcon $width={26}>
          <MeetIcon />
        </TrayIcon>
        <TrayClock>
          <div>2:03 PM</div>
          <div>11/11/2023</div>
        </TrayClock>
        <Notify>
          <svg width="18" height="16" viewBox="0 0 18 16" fill="#111">
            <path d="M0 0h16v11H6l-3 3v-3H0z" />
          </svg>
          <NotifyCount>9</NotifyCount>
        </Notify>
      </Tray>
    </Taskbar>
  </Screen>
);

export default App;
